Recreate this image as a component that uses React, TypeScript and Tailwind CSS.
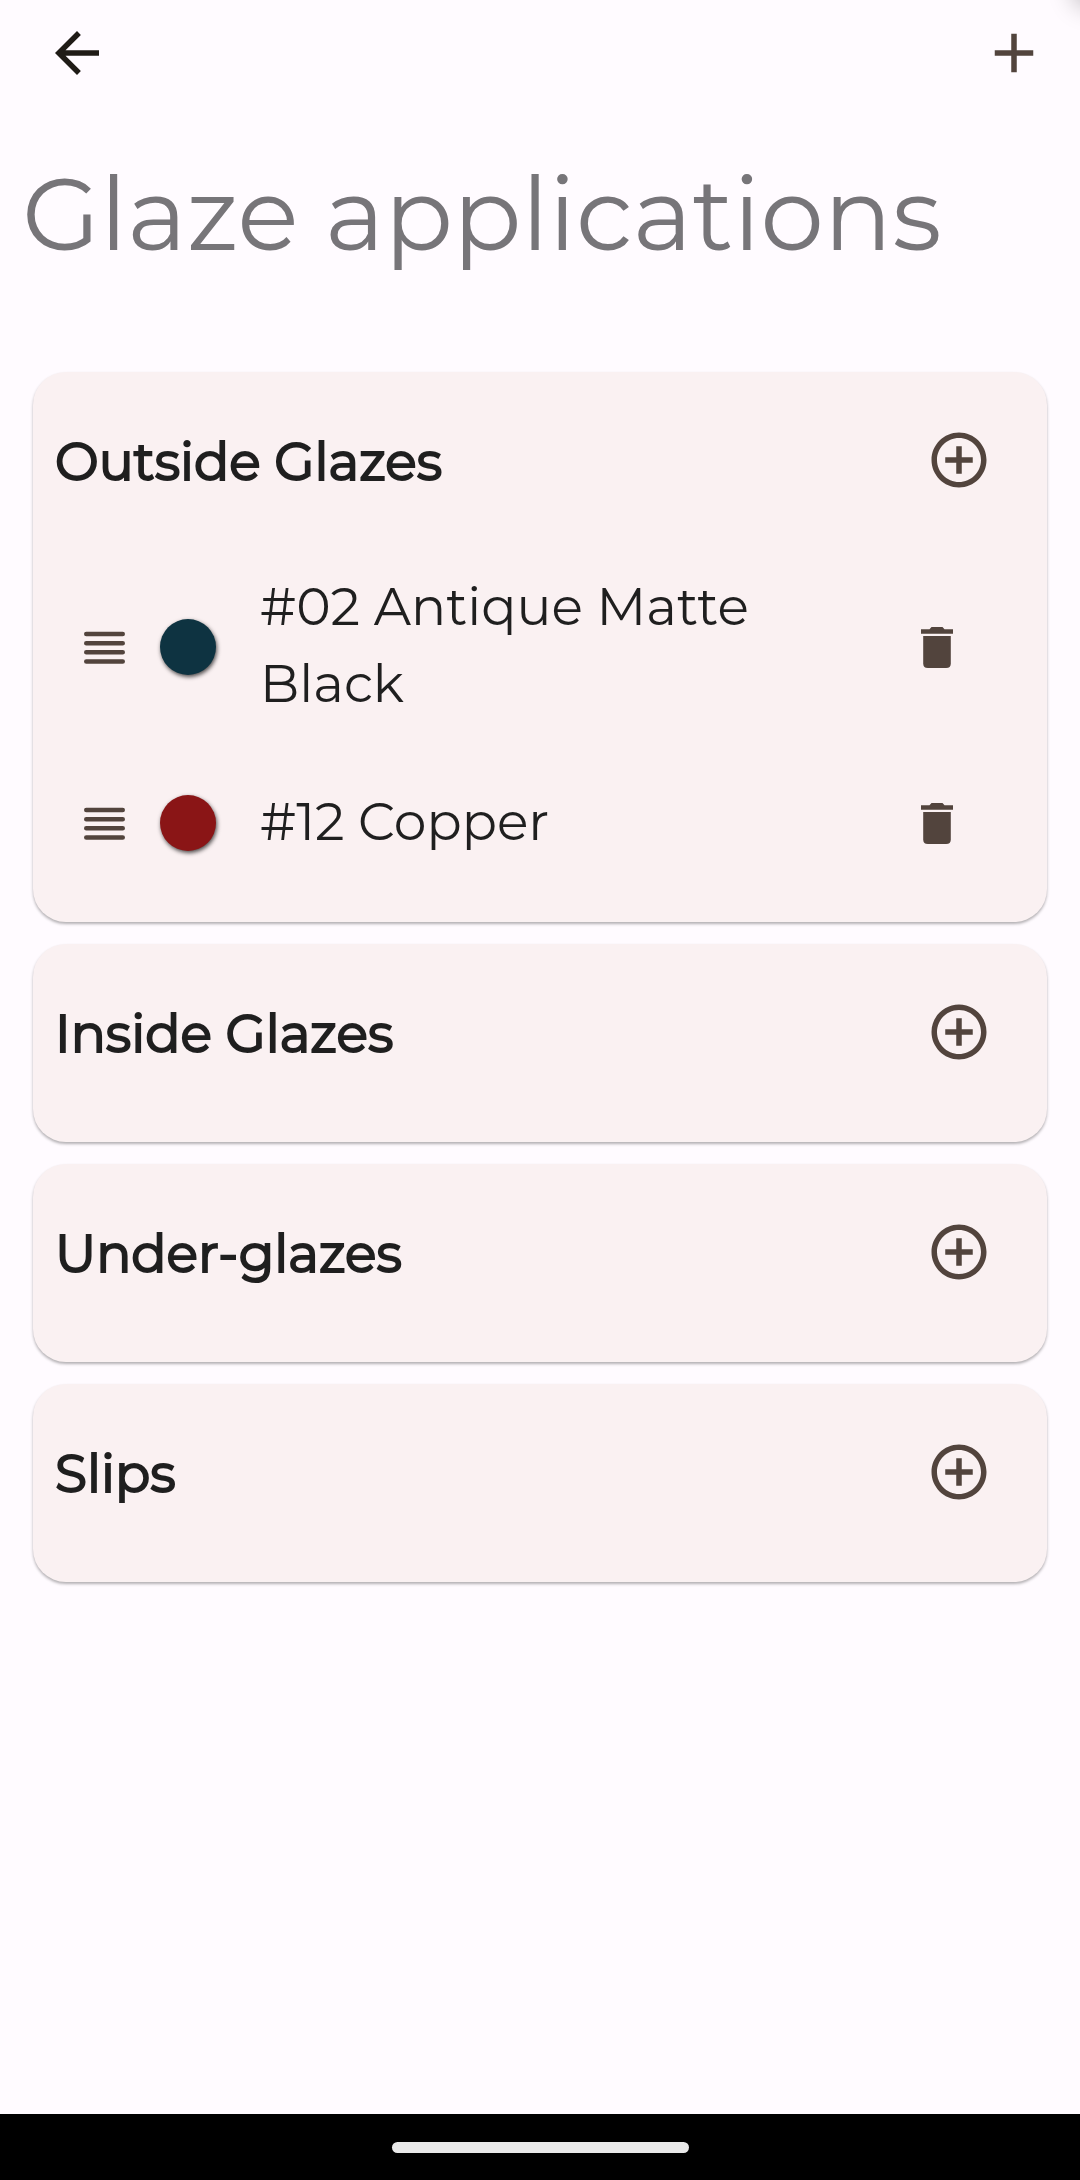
import { MdAdd, MdAddCircleOutline, MdArrowBack } from "react-icons/md";

type Glaze = {
  name: string;
  swatch: string;
};

type Section = {
  title: string;
  glazes: Glaze[];
};

const sections: Section[] = [
  {
    title: "Outside Glazes",
    glazes: [
      { name: "#02 Antique Matte Black", swatch: "bg-[#0e3341]" },
      { name: "#12 Copper", swatch: "bg-[#8a1516]" },
    ],
  },
  { title: "Inside Glazes", glazes: [] },
  { title: "Under-glazes", glazes: [] },
  { title: "Slips", glazes: [] },
];

const DragIcon = () => (
  <svg
    viewBox="0 0 55 55"
    className="size-[55px] shrink-0"
    stroke="currentColor"
    strokeWidth="4.6"
    strokeLinecap="round"
  >
    <path d="M9.3 14H45.7M9.3 23.2H45.7M9.3 32.3H45.7M9.3 41.5H45.7" />
  </svg>
);

const TrashIcon = () => (
  <svg viewBox="0 0 56 56" className="size-[56px]" fill="currentColor">
    <path d="M12 10.2H20.5L22.5 7.9H33.5L35.5 10.2H44V14.7H12Z" />
    <path d="M14.2 17H41.8V44.5Q41.8 49 37.2 49H18.8Q14.2 49 14.2 44.5Z" />
  </svg>
);

const GlazeRow = ({ name, swatch }: Glaze) => (
  <li className="flex min-h-[176px] items-center px-11 text-[#52443d]">
    <DragIcon />
    <span
      className={`ml-7 size-[56px] shrink-0 rounded-full shadow-[1px_2px_4px_rgba(0,0,0,0.7)] ${swatch}`}
    />
    <p className="ml-11 flex-1 pb-1 text-[52px] leading-[77px] text-[#1f1f1f]">
      {name}
    </p>
    <button
      aria-label={`Delete ${name}`}
      className="flex size-[132px] shrink-0 items-center justify-center"
    >
      <TrashIcon />
    </button>
  </li>
);

const GlazeCard = ({ title, glazes }: Section) => (
  <section className="rounded-[33px] bg-[#faf1f2] pt-[22px] pb-[11px] shadow-[0_2px_3px_rgba(0,0,0,0.3)]">
    <div className="mb-[33px] flex items-center justify-between px-[22px]">
      <h2 className="pt-1 text-[52px] leading-[66px] text-[#1f1f1f] [-webkit-text-stroke:2px_#1f1f1f]">
        {title}
      </h2>
      <button
        aria-label={`Add to ${title}`}
        className="flex size-[132px] items-center justify-center text-[#52443d]"
      >
        <MdAddCircleOutline size={66} />
      </button>
    </div>
    {glazes.length > 0 && (
      <ul>
        {glazes.map((glaze) => (
          <GlazeRow key={glaze.name} {...glaze} />
        ))}
      </ul>
    )}
  </section>
);

const App = () => (
  <div className="relative flex min-h-screen flex-col overflow-hidden bg-[#fffbff] font-['Montserrat','Inter',sans-serif]">
    <div className="absolute -top-6 -right-6 size-6 rounded-full shadow-[0_0_24px_8px_rgba(0,0,0,0.25)]" />

    <header className="flex h-[106px] items-center justify-between pr-[33px] pl-11">
      <button aria-label="Back" className="text-[#1f1b16]">
        <MdArrowBack size={66} />
      </button>
      <button aria-label="Add" className="text-[#52443d]">
        <MdAdd size={66} />
      </button>
    </header>

    <h1 className="px-[22px] pt-12 pb-[98px] text-[101px] leading-[120px] whitespace-nowrap text-[#777579]">
      Glaze applications
    </h1>

    <main className="flex flex-1 flex-col gap-[22px] px-[33px]">
      {sections.map((section) => (
        <GlazeCard key={section.title} {...section} />
      ))}
    </main>

    <footer className="flex h-[66px] items-center justify-center bg-black">
      <div className="h-[11px] w-[297px] rounded-full bg-[#eaeaea]" />
    </footer>
  </div>
);

export default App;
